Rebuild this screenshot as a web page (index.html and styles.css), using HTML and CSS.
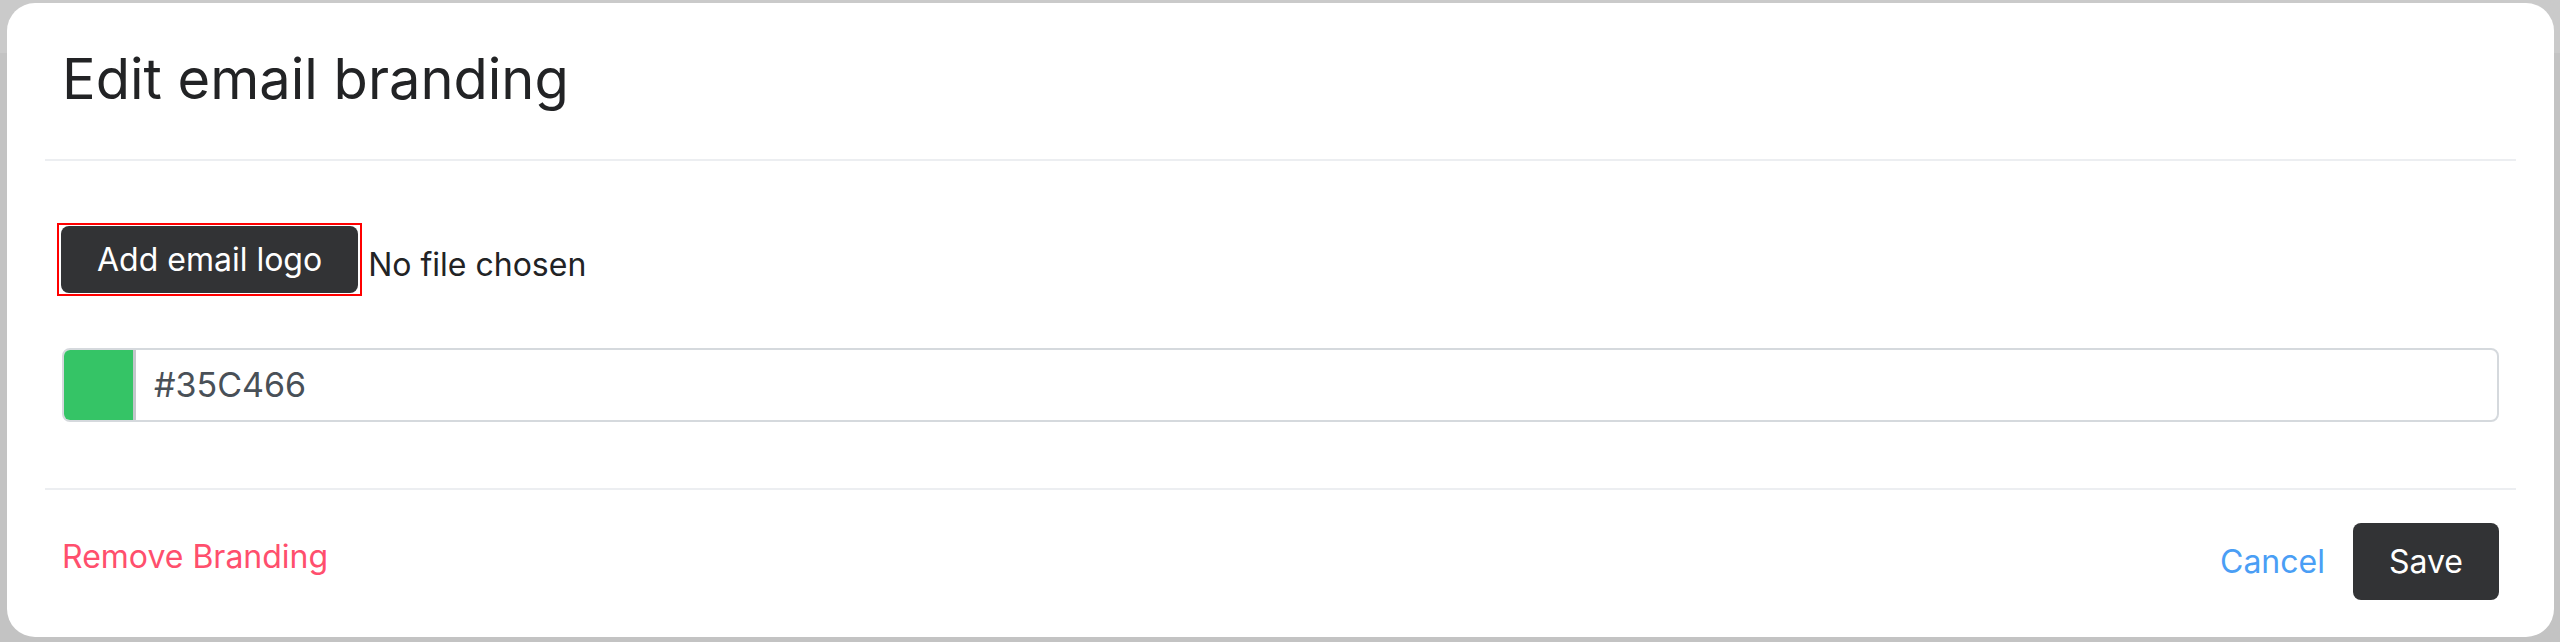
FILE: index.html
```html
<!DOCTYPE html>
<html lang="en">
<head>
<meta charset="utf-8">
<title>Edit email branding</title>
<link rel="stylesheet" href="styles.css">
</head>
<body>
<div class="backdrop">
  <div class="modal">
    <div class="modal-header">
      <h1 class="modal-title">Edit email branding</h1>
    </div>
    <div class="modal-body">
      <div class="file-row">
        <span class="focus-ring"><button class="file-btn" type="button">Add email logo</button></span>
        <span class="file-name">No file chosen</span>
      </div>
      <div class="color-field">
        <span class="swatch"></span>
        <span class="color-value">#35C466</span>
      </div>
    </div>
    <div class="modal-footer">
      <a class="remove-link" href="#">Remove Branding</a>
      <div class="actions">
        <a class="cancel-link" href="#">Cancel</a>
        <button class="save-btn" type="button">Save</button>
      </div>
    </div>
  </div>
</div>
</body>
</html>
```

FILE: styles.css
```css
* {
  box-sizing: border-box;
}

html, body {
  margin: 0;
  height: 100%;
}

body {
  font-family: Inter, "Noto Sans", sans-serif;
  background: linear-gradient(#cacaca 0, #cacaca 53px, #c3c3c3 53px);
}

.backdrop {
  height: 642px;
  padding: 3px 6px 5px 7px;
}

.modal {
  height: 100%;
  background: #ffffff;
  border-radius: 28px;
  display: flex;
  flex-direction: column;
}

.modal-header {
  margin: 0 38px;
  padding: 42px 17px 46px;
  border-bottom: 2px solid #eceef1;
}

.modal-title {
  margin: 0;
  font-size: 56px;
  line-height: 68px;
  font-weight: 400;
  color: #222325;
}

.modal-body {
  margin: 0 38px;
  padding: 61px 17px 66px;
  display: flex;
  flex-direction: column;
  gap: 52px;
}

.file-row {
  display: flex;
  align-items: center;
  gap: 6px;
  height: 74px;
  margin-left: -5px;
}

.focus-ring {
  display: flex;
  border: 2px solid #ff0000;
  padding: 1px 2px;
}

.file-btn {
  height: 67px;
  padding: 0 36px;
  border: none;
  border-radius: 8px;
  background: #323335;
  color: #ffffff;
  font-family: inherit;
  font-size: 32px;
  line-height: 39px;
}

.file-name {
  font-size: 32px;
  line-height: 39px;
  color: #222325;
  padding-top: 10px;
}

.color-field {
  display: flex;
  align-items: center;
  height: 74px;
  border: 2px solid #d5d9dd;
  border-radius: 8px;
  overflow: hidden;
}

.swatch {
  align-self: stretch;
  width: 72px;
  background: #35c466;
  border-right: 3px solid #c3c7cb;
}

.color-value {
  padding-left: 18px;
  font-size: 34px;
  line-height: 40px;
  color: #495057;
}

.modal-footer {
  margin: 0 38px;
  padding: 33px 17px 37px;
  border-top: 2px solid #eceef1;
  display: flex;
  align-items: center;
  justify-content: space-between;
}

.remove-link {
  font-size: 32px;
  line-height: 39px;
  color: #ff4f6d;
  text-decoration: none;
  margin-bottom: 10px;
}

.actions {
  display: flex;
  align-items: center;
  gap: 28px;
}

.cancel-link {
  font-size: 32px;
  line-height: 39px;
  color: #4a9ef5;
  text-decoration: none;
}

.save-btn {
  height: 77px;
  padding: 0 36px;
  border: none;
  border-radius: 8px;
  background: #323335;
  color: #ffffff;
  font-family: inherit;
  font-size: 32px;
  line-height: 39px;
}
```
